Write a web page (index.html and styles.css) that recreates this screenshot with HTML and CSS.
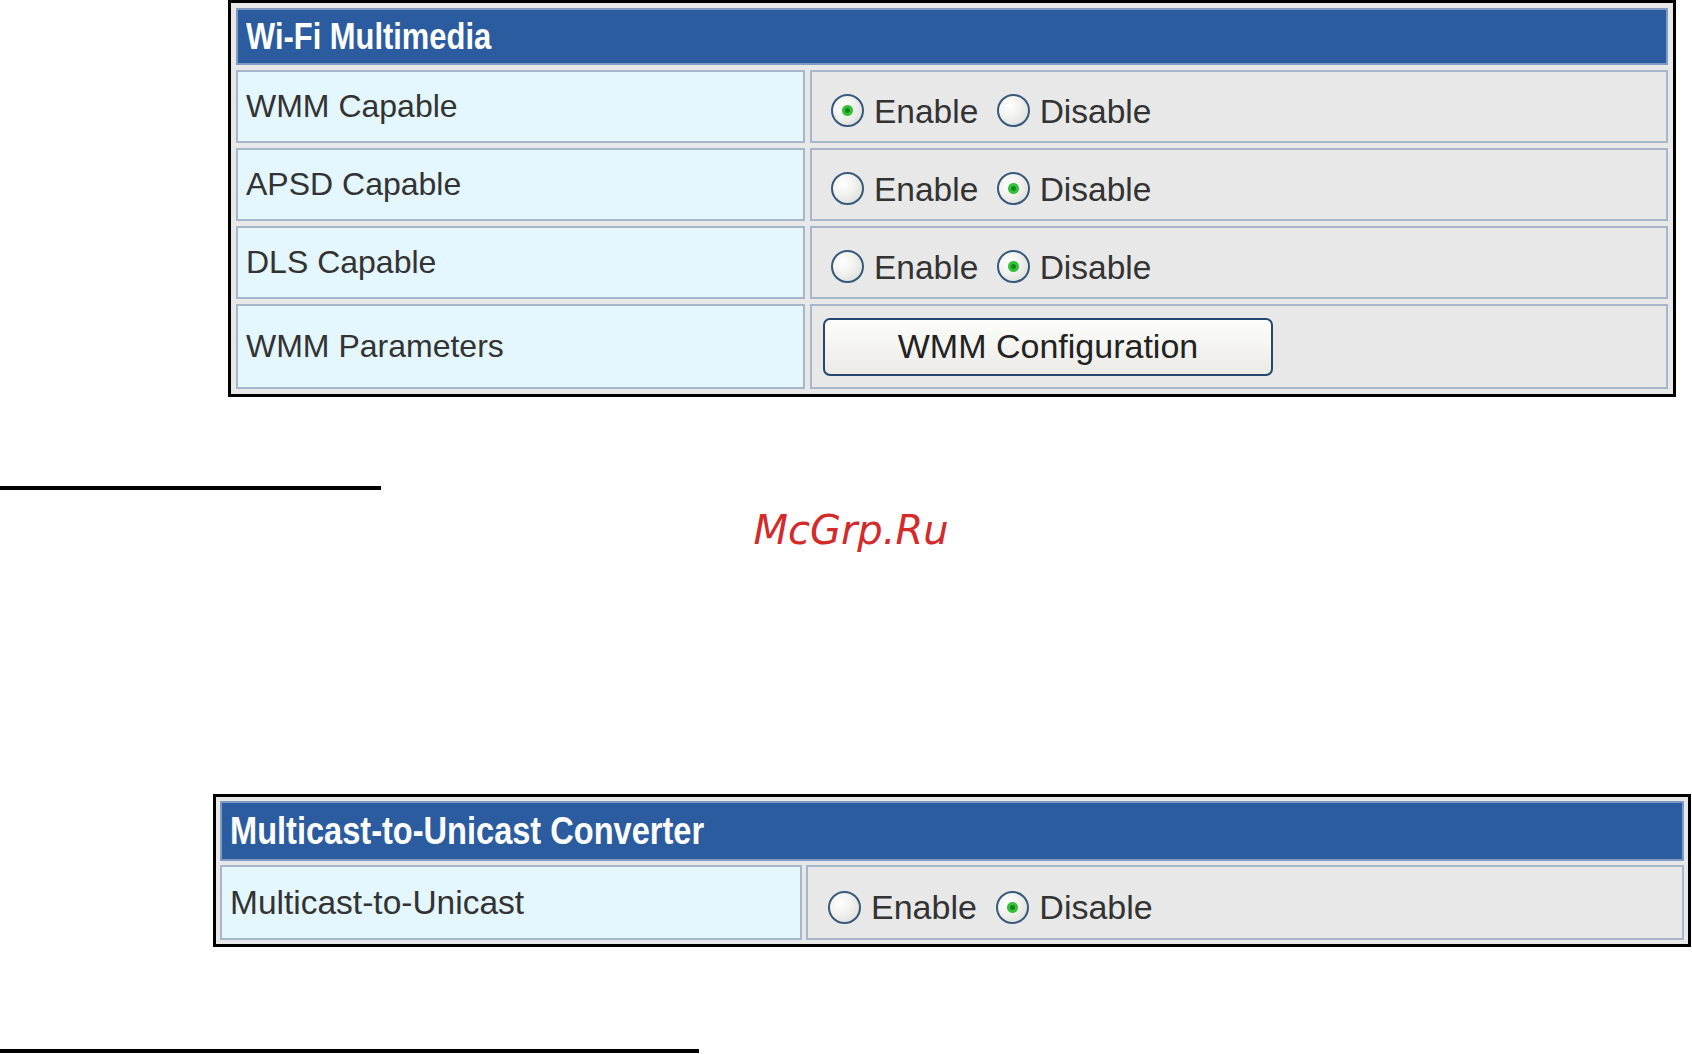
FILE: index.html
```html
<!DOCTYPE html>
<html>
<head>
  <meta charset="UTF-8">
  <title>Wi-Fi Multimedia</title>
  <link rel="stylesheet" href="styles.css">
</head>
<body>
  <table class="panel panel-wmm">
    <tr class="head-row">
      <th colspan="2"><span class="title">Wi-Fi Multimedia</span></th>
    </tr>
    <tr class="row">
      <td class="label">WMM Capable</td>
      <td class="value">
        <label class="opt"><input type="radio" name="wmm" checked>Enable</label>
        <label class="opt"><input type="radio" name="wmm">Disable</label>
      </td>
    </tr>
    <tr class="row">
      <td class="label">APSD Capable</td>
      <td class="value">
        <label class="opt"><input type="radio" name="apsd">Enable</label>
        <label class="opt"><input type="radio" name="apsd" checked>Disable</label>
      </td>
    </tr>
    <tr class="row">
      <td class="label">DLS Capable</td>
      <td class="value">
        <label class="opt"><input type="radio" name="dls">Enable</label>
        <label class="opt"><input type="radio" name="dls" checked>Disable</label>
      </td>
    </tr>
    <tr class="row row-tall">
      <td class="label">WMM Parameters</td>
      <td class="value value-btn">
        <button class="btn">WMM Configuration</button>
      </td>
    </tr>
  </table>

  <hr class="rule rule-short">

  <div class="mark">McGrp.Ru</div>

  <table class="panel panel-m2u">
    <tr class="head-row">
      <th colspan="2"><span class="title">Multicast-to-Unicast Converter</span></th>
    </tr>
    <tr class="row">
      <td class="label">Multicast-to-Unicast</td>
      <td class="value">
        <label class="opt"><input type="radio" name="m2u">Enable</label>
        <label class="opt"><input type="radio" name="m2u" checked>Disable</label>
      </td>
    </tr>
  </table>

  <hr class="rule rule-long">
</body>
</html>
```

FILE: styles.css
```css
html, body {
  margin: 0;
  background: #fff;
  font-family: "Liberation Sans", Arial, sans-serif;
}

.panel {
  border-collapse: separate;
  border-spacing: 5px;
  border: 3px solid #000;
  background: #e8e8e8;
  color: #333;
  font-size: 32px;
}

.panel th,
.panel td {
  box-sizing: border-box;
  border: 2px solid #a7b7cb;
  vertical-align: middle;
  text-align: left;
}

.panel th {
  background: #2b5c9f;
  border-color: #7f9bc2;
  color: #fff;
  font-weight: bold;
  font-size: 37px;
  padding: 0 8px;
  white-space: nowrap;
}

/* the original header font is a narrow face */
.title {
  display: inline-block;
  transform: scaleX(0.835);
  transform-origin: left center;
}

.label {
  background: #e4f6fe;
  padding: 0 8px;
}

.value {
  background: #e8e8e8;
  padding: 10px 10px 0;
  font-size: 33.5px;
}

.value-btn {
  padding-top: 0;
}

/* first table */
.panel-wmm {
  margin-left: 228px;
  width: 1448px;
}

.panel-wmm .head-row { height: 57px; }
.panel-wmm .row { height: 73px; }
.panel-wmm .row-tall { height: 85px; }
.panel-wmm .label { width: 569px; }

/* second table */
.panel-m2u {
  border-spacing: 4px;
  margin-left: 213px;
  margin-top: 240px;
  width: 1478px;
  font-size: 33.5px;
}

.panel-m2u th { font-size: 39px; }
.panel-m2u .head-row { height: 60px; }
.panel-m2u .row { height: 75px; }
.panel-m2u .label { width: 582px; }
.panel-m2u .value { font-size: 34px; }
.panel-m2u .opt input { margin-left: 10px; }

.opt input {
  appearance: none;
  -webkit-appearance: none;
  box-sizing: border-box;
  width: 33px;
  height: 33px;
  margin: 0 10px 0 9px;
  border: 2px solid #36597c;
  border-radius: 50%;
  background: radial-gradient(circle at 35% 35%, #fff 0, #f2f2ef 40%, #d6d6d2 100%);
  vertical-align: middle;
  position: relative;
  top: -3px;
}

.opt input:checked {
  background:
    radial-gradient(circle, #13861a 0 2px, #35c23a 3px 5px, transparent 6px),
    radial-gradient(circle at 35% 35%, #fff 0, #f2f2ef 40%, #d6d6d2 100%);
}

.btn {
  box-sizing: border-box;
  width: 450px;
  height: 58px;
  margin-left: 1px;
  border: 2px solid #24476d;
  border-radius: 7px;
  background: linear-gradient(#fdfdfb, #ebeae5);
  color: #222;
  font-family: "Liberation Sans", Arial, sans-serif;
  font-size: 34px;
}

.rule {
  border: 0;
  height: 4px;
  background: #000;
  margin: 0;
}

.rule-short {
  width: 381px;
  margin-top: 89px;
}

.rule-long {
  width: 699px;
  margin-top: 102px;
}

.mark {
  margin-top: 16px;
  padding-left: 10px;
  text-align: center;
  font-family: "DejaVu Sans", sans-serif;
  font-style: italic;
  font-size: 40px;
  line-height: 48px;
  color: #d42a2a;
}
```
